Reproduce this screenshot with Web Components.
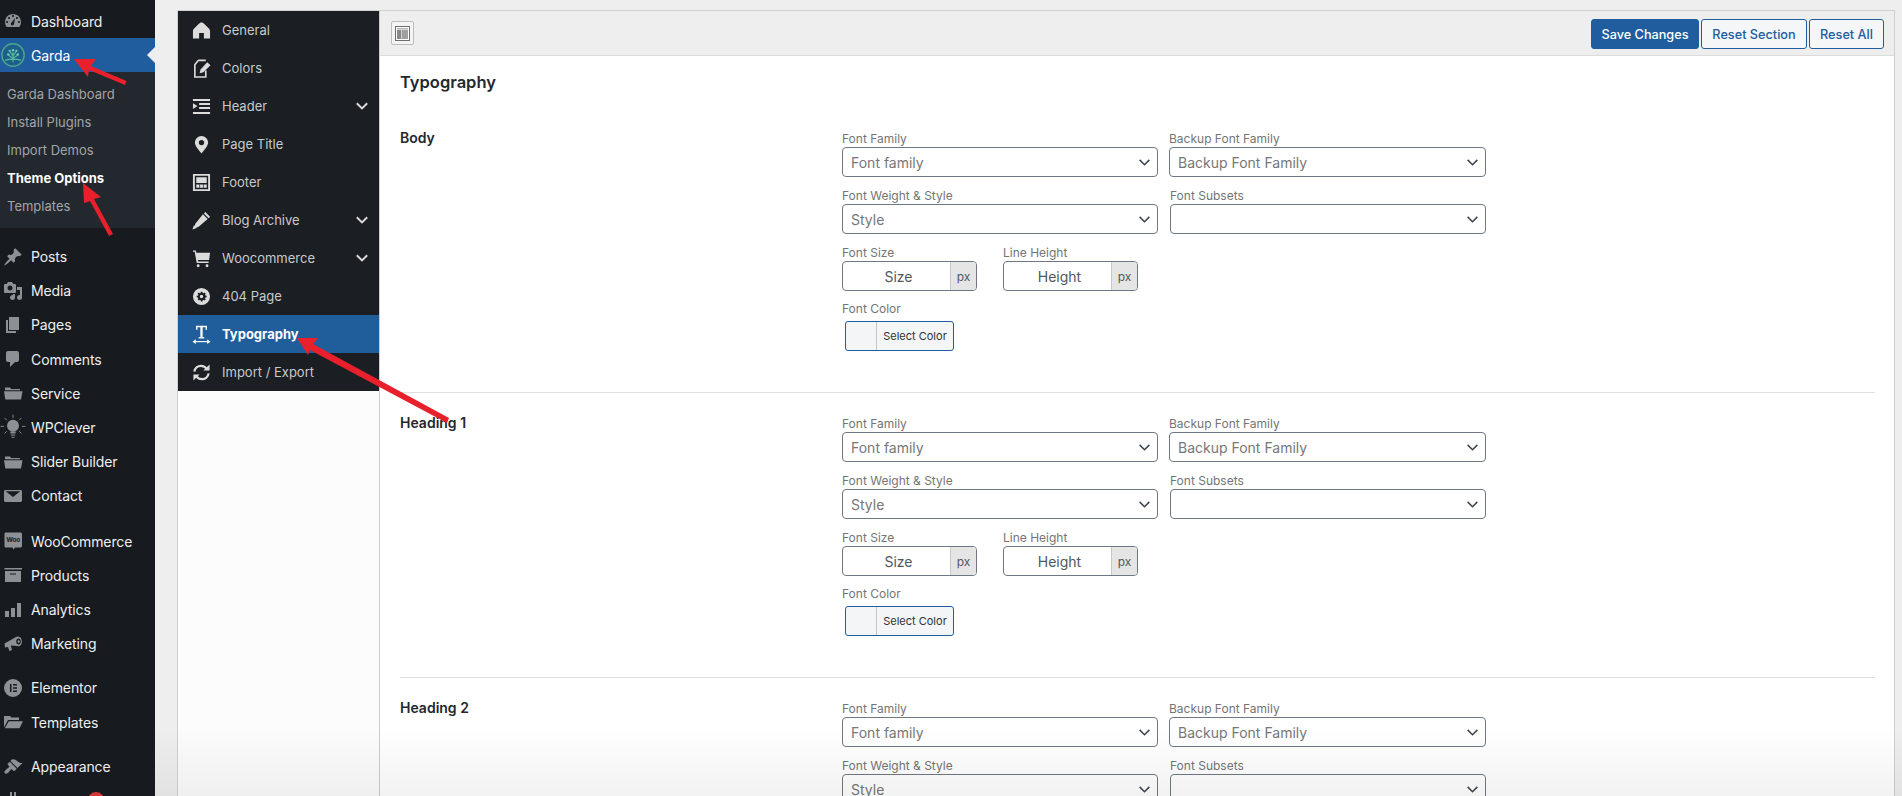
<!DOCTYPE html>
<html lang="en">
<head>
<meta charset="utf-8">
<title>Theme Options</title>
<style>
  html, body { margin: 0; height: 796px; overflow: hidden; background: #eeeeee; }
  body { font-family: Inter, "Liberation Sans", sans-serif; position: relative; display: flex; align-items: stretch; }
</style>
</head>
<body>
<wp-admin-menu></wp-admin-menu>
<options-panel></options-panel>
<page-annotations></page-annotations>

<script>
const ICONS = {
  dashboard: '<path fill-rule="evenodd" d="M3.76 16h12.48c1.1-1.37 1.76-3.11 1.76-5 0-4.42-3.58-8-8-8s-8 3.58-8 8c0 1.89.66 3.63 1.76 5zM10 4c.55 0 1 .45 1 1s-.45 1-1 1-1-.45-1-1 .45-1 1-1zM6 6c.55 0 1 .45 1 1s-.45 1-1 1-1-.45-1-1 .45-1 1-1zm8 0c.55 0 1 .45 1 1s-.45 1-1 1-1-.45-1-1 .45-1 1-1zm-5.37 5.55L12 7l-1 6c-.1 1-1 1.5-1.8 1.4-1-.2-1.6-1.1-1.2-2.2.1-.3.3-.5.63-.65zM4 10c.55 0 1 .45 1 1s-.45 1-1 1-1-.45-1-1 .45-1 1-1zm12 0c.55 0 1 .45 1 1s-.45 1-1 1-1-.45-1-1 .45-1 1-1z"/>',
  garda: '<circle cx="10" cy="10" r="9.300" fill="#1d5f8a" stroke="#4aa58a" stroke-width="1.200"/><g fill="none" stroke="#55b79b" stroke-width="1"><path d="M10 16V8M10 13 6 10M10 13l4-3M10 11 7.500 7M10 11l2.500-4M3.500 14.500c2-1 4-1 6.500-1s4.500 0 6.500 1"/></g><g fill="#6fd0b0"><circle cx="10" cy="6" r="1"/><circle cx="6" cy="9.500" r="1"/><circle cx="14" cy="9.500" r="1"/><circle cx="7.200" cy="6.500" r=".9"/><circle cx="12.800" cy="6.500" r=".9"/></g>',
  pin: '<path d="M10.44 3.02l1.82-1.82 6.36 6.35-1.83 1.82c-1.05-.68-2.48-.57-3.41.36l-.75.75c-.92.93-1.04 2.35-.35 3.41l-1.83 1.82-2.41-2.41-2.8 2.79c-.42.42-3.38 2.71-3.8 2.29s1.86-3.39 2.28-3.81l2.79-2.79L4.1 9.36l1.83-1.82c1.05.69 2.48.57 3.4-.36l.75-.75c.93-.92 1.05-2.35.36-3.41z"/>',
  media: '<path fill-rule="evenodd" d="M13 11V4c0-.55-.45-1-1-1h-1.67L9 1H5L3.67 3H2c-.55 0-1 .45-1 1v7c0 .55.45 1 1 1h10c.55 0 1-.45 1-1zM7 4.500c1.380 0 2.500 1.120 2.500 2.500S8.380 9.500 7 9.500 4.500 8.380 4.500 7 5.620 4.500 7 4.500zM14 6h5v10.500c0 1.380-1.120 2.500-2.500 2.500S14 17.880 14 16.500s1.120-2.500 2.500-2.500c.17 0 .34.02.5.05V9h-3V6zm-4 8.050V13h2v3.500c0 1.380-1.120 2.500-2.500 2.500S7 17.880 7 16.500 8.120 14 9.500 14c.17 0 .34.02.5.05z"/>',
  pages: '<path d="M6 15V2h10v13H6zm-1 1h8v2H3V5h2v11z"/>',
  comments: '<path d="M5 2h9c1.100 0 2 .9 2 2v7c0 1.100-.9 2-2 2h-2l-5 5v-5H5c-1.100 0-2-.9-2-2V4c0-1.100.9-2 2-2z"/>',
  folder: '<path d="M2 4.500h5l1.200 1.500H17v1.300H2zM1 8.200h18.500L18 16.500H2.300z"/>',
  bulb: '<g fill="none" stroke="currentColor" stroke-width=".7"><path d="M10 .5v2.500M3.500 3l1.800 1.800M16.500 3l-1.800 1.800M.5 9.500H3M17 9.500h2.500M3.500 15l1.800-1.800M16.500 15l-1.800-1.800"/></g><circle cx="10" cy="9" r="4.600"/><path d="M8 13.500h4V15H8zM8.300 15.800h3.400v.8H8.300zM8.800 17.500h2.400v.8H8.800z"/>',
  email: '<path fill-rule="evenodd" d="M2.500 4h15c.8 0 1.500.7 1.500 1.500v9c0 .8-.7 1.500-1.500 1.500h-15C1.700 16 1 15.300 1 14.500v-9C1 4.700 1.700 4 2.500 4zm.2 1.300L10 11l7.300-5.700v-.1H2.700z"/>',
  woo: '<path d="M3 1.500h14.500c.9 0 1.500.6 1.500 1.500v12c0 .9-.6 1.500-1.500 1.500H12l-1.500 2-1-2H3c-.9 0-1.500-.6-1.500-1.500V3c0-.9.6-1.500 1.500-1.500z"/><text x="10.200" y="11" font-size="6.500" font-weight="700" text-anchor="middle" fill="#171b1f" font-family="Inter, sans-serif">Woo</text>',
  archive: '<path fill-rule="evenodd" d="M19 3v1.500H1.500V3zM2 6h16v11H2zm11 3.500V8.500H7v1z"/>',
  bars: '<path d="M2 11h4v6H2zM8 8h4v9H8zM14 3h4v14h-4z"/>',
  megaphone: '<path fill-rule="evenodd" d="M1.500 9.500 13 3c1.500-1 4.500-.8 5.500 2.500s-.2 6-2.500 6.800l-7.200-.8-1 .3 1.200 4-2.400 1.500L5 13l-3 .5zM15.500 4.500c-1.300 0-2.300 1.300-2.300 3s1 3 2.300 3 2.300-1.300 2.300-3-1-3-2.300-3zM15.600 6.200c.7 0 1.100.6 1.100 1.300s-.4 1.300-1.100 1.300c-.6 0-1.100-.6-1.100-1.300s.5-1.300 1.100-1.300z"/>',
  elementor: '<path fill-rule="evenodd" d="M10 1a9 9 0 1 1 0 18 9 9 0 0 1 0-18zM7 6v8h1.500V6zm3 0v1.500h4V6zm0 3.200v1.600h4V9.200zm0 3.300V14h4v-1.500z"/>',
  folderOpen: '<path d="M1 4h6l1.500 1.500H16V8H5L1 15.500zM5.800 9.300H20l-3.500 7H1.800z"/>',
  brush: '<path d="M14.480 11.060 7.410 3.990l1.500-1.500c.5-.56 2.300-.47 3.510.32 1.210.8 1.430 1.280 2.910 2.100 1.180.64 2.450 1.260 4.450.85zm-.71.71L6.700 4.700 4.930 6.470c-.39.39-.39 1.020 0 1.410l1.060 1.060c.39.39.39 1.030 0 1.420-.6.6-1.430 1.110-2.210 1.690-.35.26-.7.530-1.010.84C1.430 13.710.96 15.120 1.980 16.140c1.020 1 2.430.54 3.250-.28.31-.31.58-.66.85-1.020.57-.78 1.080-1.610 1.690-2.210.39-.39 1.020-.39 1.410 0l1.060 1.060c.39.39 1.020.39 1.410 0z"/>',
  plug: '<path d="M7 1v5H5v4l3 3v6h4v-6l3-3V6h-2V1h-2v5H9V1z"/>',

  home: '<path d="M10 1.500c1.300 0 2.100.7 3 1.600l5 5.100c.6.6 1 1.300 1 2.200V18.500h-6.500V12.500h-5V18.500H1V10.400c0-.9.4-1.600 1-2.200l5-5.100C7.900 2.200 8.700 1.500 10 1.500z"/>',
  edit: '<g fill="none" stroke="currentColor" stroke-width="1.700"><path d="M6.500 1.500h8M3 6l3.500-4.500M3 5.500v13.500h11.500V12"/></g><path d="M16 3.500 19.500 6.500 12 14l-4 1 1-4z"/>',
  indent: '<path d="M1 2h18v2.200H1zM7.500 6.300H19v2.200H7.500zM7.500 10.400H19v2.200H7.500zM1 15.800h18V18H1zM1 6.500l4.800 3L1 12.500z"/>',
  marker: '<path fill-rule="evenodd" d="M10 1a7 7 0 0 1 7 7c0 3.500-4.500 8.500-7 11.500C7.500 16.500 3 11.500 3 8a7 7 0 0 1 7-7zm0 4.200a2.800 2.800 0 1 0 0 5.600 2.800 2.800 0 0 0 0-5.600z"/>',
  footer: '<path fill-rule="evenodd" d="M1 1h18v18H1zM3 3v14h14V3zM4.500 4.500h11v6h-11zM4.500 12h3.300v3.500H4.500zM8.500 12h3v3.500h-3zM12.200 12h3.300v3.500h-3.300z"/>',
  pencil: '<path d="M14 1 19 6l-1.500 1.500-5-5zM11.500 3.500l5 5-9.500 8-5 2 1.500-5z"/><path d="M.5 19.500l1.500-4.500 3 3z"/>',
  cart: '<path fill-rule="evenodd" d="M1 1.500h3l.6 2.500H19l-1 7.500H6.200l.3 1.700H17.500v1.500H5L2.800 3H1z"/><circle cx="6.500" cy="17.600" r="1.500"/><circle cx="15.800" cy="17.600" r="1.500"/>',
  cog: '<path fill-rule="evenodd" d="M10 1a9 9 0 1 1 0 18 9 9 0 0 1 0-18zm-.9 4 .1 1.300-1 .4-1-.8-1.300 1.300.8 1 -.4 1L5 9.100v1.800l1.300.1.4 1-.8 1 1.300 1.300 1-.8 1 .4.1 1.300h1.800l.1-1.300 1-.4 1 .8 1.300-1.300-.8-1 .4-1 1.300-.1V9.100l-1.300-.1-.4-1 .8-1-1.300-1.300-1 .8-1-.4L10.900 5zM10 8.200a1.800 1.800 0 1 1 0 3.600 1.800 1.800 0 0 1 0-3.600z"/>',
  type: '<g fill="none" stroke="currentColor"><path stroke-width="1.500" d="M5 5V1.500h10V5"/><path stroke-width="2.400" d="M10 1.500v11.500"/><path stroke-width="1.400" d="M7 13.500h6"/><path stroke-width="1.200" d="M2 17.500h16"/></g><path d="M0.500 17.500l3.500-2.500v5zM19.500 17.500l-3.500-2.500v5z"/>',
  refresh: '<g fill="none" stroke="currentColor" stroke-width="2.300"><path d="M2.500 9C3 5.500 6 3 9.500 3c2.500 0 4.700 1.200 6 3.200"/><path d="M17.500 11c-.5 3.500-3.500 6-7 6-2.500 0-4.700-1.200-6-3.200"/></g><path d="M18.500 1.500V8H12zM1.500 18.500V12H8z"/>',
  chevron: '<path fill="none" stroke="currentColor" stroke-width="2.400" d="M3.500 6.500 10 13l6.500-6.500"/>'
};

const icon = (name, size) => `<svg xmlns="http://www.w3.org/2000/svg" width="${size}" height="${size}" viewBox="0 0 20 20" fill="currentColor" aria-hidden="true">${ICONS[name]}</svg>`;

class WpMenuItem extends HTMLElement {
  connectedCallback() {
    const root = this.attachShadow({ mode: 'open' });
    root.innerHTML = `
      <style>
        :host { display: flex; align-items: center; height: 34.15px; color: #eeeff0; font-size: 14px; position: relative; letter-spacing: -.1px; }
        :host([active]) { background: #205d9f; color: #fff; height: 34px; }
        :host([active])::after {
          content: ''; position: absolute; right: 0; top: 9px;
          border: 8px solid transparent; border-right-color: #eeeeee; border-left-width: 0;
        }
        .ic { width: 26px; margin-right: 5px; display: flex; justify-content: center; color: #8d9094; }
        :host([active]) .ic { color: inherit; }
        svg { display: block; flex: none; }
      </style>
      <span class="ic">${icon(this.getAttribute('icon'), this.getAttribute('size') || 20)}</span><slot></slot>`;
  }
}

class WpSubItem extends HTMLElement {
  connectedCallback() {
    this.attachShadow({ mode: 'open' }).innerHTML = `
      <style>
        :host { display: flex; align-items: center; height: 28px; padding-left: 7px; color: #a2a5a8; font-size: 13px; }
        :host([current]) { color: #fff; font-weight: 700; }
      </style><slot></slot>`;
  }
}

class WpAdminMenu extends HTMLElement {
  connectedCallback() {
    const root = this.attachShadow({ mode: 'open' });
    root.innerHTML = `
      <style>
        :host { display: flex; flex-direction: column; gap: 11.500px; flex: 0 0 155px; width: 155px; height: 796px; overflow: hidden; background: #171b1f; box-sizing: border-box; padding-top: 4px; }
        .sub { background: #22282d; padding: 8px 0; }
        .g4 { margin-top: -1.500px; }
        .g5 { margin-top: -1px; }
        .badge { position: absolute; left: 88px; top: 8px; width: 16px; height: 16px; border-radius: 50%; background: #d63638; }
      </style>
      <div>
        <wp-menu-item icon="dashboard">Dashboard</wp-menu-item>
        <wp-menu-item icon="garda" size="24" active>Garda</wp-menu-item>
        <div class="sub">
          <wp-sub-item>Garda Dashboard</wp-sub-item>
          <wp-sub-item>Install Plugins</wp-sub-item>
          <wp-sub-item>Import Demos</wp-sub-item>
          <wp-sub-item current>Theme Options</wp-sub-item>
          <wp-sub-item>Templates</wp-sub-item>
        </div>
      </div>
      <div>
        <wp-menu-item icon="pin">Posts</wp-menu-item>
        <wp-menu-item icon="media">Media</wp-menu-item>
        <wp-menu-item icon="pages">Pages</wp-menu-item>
        <wp-menu-item icon="comments">Comments</wp-menu-item>
        <wp-menu-item icon="folder">Service</wp-menu-item>
        <wp-menu-item icon="bulb" size="26">WPClever</wp-menu-item>
        <wp-menu-item icon="folder">Slider Builder</wp-menu-item>
        <wp-menu-item icon="email">Contact</wp-menu-item>
      </div>
      <div>
        <wp-menu-item icon="woo">WooCommerce</wp-menu-item>
        <wp-menu-item icon="archive">Products</wp-menu-item>
        <wp-menu-item icon="bars">Analytics</wp-menu-item>
        <wp-menu-item icon="megaphone">Marketing</wp-menu-item>
      </div>
      <div class="g4">
        <wp-menu-item icon="elementor">Elementor</wp-menu-item>
        <wp-menu-item icon="folderOpen">Templates</wp-menu-item>
      </div>
      <div class="g5">
        <wp-menu-item icon="brush">Appearance</wp-menu-item>
        <wp-menu-item icon="plug"><span class="badge"></span></wp-menu-item>
      </div>`;
  }
}

class NavItem extends HTMLElement {
  connectedCallback() {
    const root = this.attachShadow({ mode: 'open' });
    const chevron = this.hasAttribute('expand') ? `<span class="chev">${icon('chevron', 16)}</span>` : '';
    root.innerHTML = `
      <style>
        :host { display: flex; align-items: center; height: 38px; color: #c9cacc; font-size: 13px; padding-left: 14px; }
        :host([active]) { background: #205e9b; color: #fff; font-weight: 700; }
        .ic { width: 18px; margin-right: 12px; display: flex; justify-content: center; color: #dcdcdc; }
        :host([active]) .ic { color: #fff; }
        .chev { margin-left: auto; margin-right: 9px; display: flex; color: #dcdcdc; }
        svg { display: block; flex: none; }
      </style>
      <span class="ic">${icon(this.getAttribute('icon'), 19)}</span><slot></slot>${chevron}`;
  }
}

class OptionsNav extends HTMLElement {
  connectedCallback() {
    this.attachShadow({ mode: 'open' }).innerHTML = `
      <style>
        :host { display: block; background: #fcfcfc; border-right: 1px solid #cccccc; }
        nav { background: #1b1e23; }
      </style>
      <nav>
        <nav-item icon="home">General</nav-item>
        <nav-item icon="edit">Colors</nav-item>
        <nav-item icon="indent" expand>Header</nav-item>
        <nav-item icon="marker">Page Title</nav-item>
        <nav-item icon="footer">Footer</nav-item>
        <nav-item icon="pencil" expand>Blog Archive</nav-item>
        <nav-item icon="cart" expand>Woocommerce</nav-item>
        <nav-item icon="cog">404 Page</nav-item>
        <nav-item icon="type" active>Typography</nav-item>
        <nav-item icon="refresh">Import / Export</nav-item>
      </nav>`;
  }
}

class OptionsToolbar extends HTMLElement {
  connectedCallback() {
    this.attachShadow({ mode: 'open' }).innerHTML = `
      <style>
        :host { display: flex; align-items: center; height: 44px; background: #eeeeee; border-bottom: 1px solid #dcdcdc; padding: 0 10px 0 11px; }
        .toggle { width: 23px; height: 24px; box-sizing: border-box; border: 1px solid #bdbdbd; border-radius: 2px; background: #f4f4f4; display: flex; align-items: center; justify-content: center; }
        .actions { margin-left: auto; display: flex; gap: 2px; padding-top: 2px; }
        button { font: 500 12.700px Inter, "Liberation Sans", sans-serif; height: 30px; padding: 0; border-radius: 3px; border: 1px solid #205d9f; background: #f4f6f7; color: #205d9f; }
        .save { width: 108px; background: #205d9f; color: #fff; }
        .section { width: 106px; }
        .all { width: 75px; }
      </style>
      <span class="toggle">
        <svg width="15" height="15" viewBox="0 0 15 15" aria-hidden="true">
          <rect x=".5" y=".5" width="14" height="14" fill="#fff" stroke="#6e6e6e"/>
          <rect x="2" y="2" width="11" height="1.500" fill="#b5b5b5"/>
          <rect x="2" y="4" width="4" height="9" fill="#8a8a8a"/>
          <rect x="6.500" y="4" width="6.500" height="9" fill="#a0a0a0"/>
        </svg>
      </span>
      <div class="actions">
        <button class="save">Save Changes</button>
        <button class="section">Reset Section</button>
        <button class="all">Reset All</button>
      </div>`;
  }
}

class FieldSelect extends HTMLElement {
  connectedCallback() {
    this.attachShadow({ mode: 'open' }).innerHTML = `
      <style>
        :host { display: block; }
        label { display: block; height: 16px; line-height: 16px; font-size: 12px; color: #757575; }
        .box { height: 30px; box-sizing: border-box; border: 1px solid #6f7882; border-radius: 4px; background: #fff; display: flex; align-items: center; padding: 0 5px 0 8px; color: #777; font-size: 14px; }
        svg { margin-left: auto; color: #3c434a; display: block; }
      </style>
      <label>${this.getAttribute('label')}</label>
      <div class="box"><slot></slot>${icon('chevron', 15).replace('stroke-width="2.400"', 'stroke-width="2"')}</div>`;
  }
}

class FieldUnit extends HTMLElement {
  connectedCallback() {
    this.attachShadow({ mode: 'open' }).innerHTML = `
      <style>
        :host { display: block; width: 135px; }
        label { display: block; height: 16px; line-height: 16px; font-size: 12px; color: #757575; }
        .box { height: 30px; box-sizing: border-box; border: 1px solid #6f7882; border-radius: 4px; background: #fff; display: flex; overflow: hidden; color: #50575e; font-size: 14px; }
        .val { flex: 1; display: flex; align-items: center; justify-content: center; padding-left: 4px; }
        .unit { width: 25px; background: #e5e5e5; border-left: 1px solid #c8c8c8; display: flex; align-items: center; justify-content: center; font-size: 12px; color: #50575e; }
      </style>
      <label>${this.getAttribute('label')}</label>
      <div class="box"><span class="val"><slot></slot></span><span class="unit">px</span></div>`;
  }
}

class FieldColor extends HTMLElement {
  connectedCallback() {
    this.attachShadow({ mode: 'open' }).innerHTML = `
      <style>
        :host { display: block; margin-top: -1px; }
        label { display: block; height: 16px; line-height: 16px; font-size: 12px; color: #757575; }
        .btn { margin: 4px 0 0 3px; width: 109px; height: 30px; box-sizing: border-box; border: 1px solid #205d9f; border-radius: 3px; background: #f3f5f6; display: flex; overflow: hidden; font-size: 11px; color: #2c3338; }
        .swatch { width: 30px; border-right: 1px solid #c4c6c8; }
        .txt { flex: 1; display: flex; align-items: center; justify-content: center; }
      </style>
      <label>${this.getAttribute('label')}</label>
      <div class="btn"><span class="swatch"></span><span class="txt">Select Color</span></div>`;
  }
}

class TypoSection extends HTMLElement {
  connectedCallback() {
    this.attachShadow({ mode: 'open' }).innerHTML = `
      <style>
        :host { display: grid; grid-template-columns: 442px 645px; padding: 23px 0 41px; border-bottom: 1px solid #dfdfdf; margin-right: 19px; }
        .name { font-size: 14px; font-weight: 600; color: #23282d; line-height: 16px; margin-top: -1px; }
        .fields { display: grid; grid-template-columns: 316px 317px; column-gap: 11px; row-gap: 11px; align-items: start; }
        .subset { margin-left: 1px; }
        .units { display: flex; gap: 26px; grid-column: 1 / 3; }
        field-color { grid-column: 1 / 3; }
      </style>
      <div class="name">${this.getAttribute('name')}</div>
      <div class="fields">
        <field-select label="Font Family">Font family</field-select>
        <field-select label="Backup Font Family">Backup Font Family</field-select>
        <field-select label="Font Weight &amp; Style">Style</field-select>
        <field-select class="subset" label="Font Subsets"></field-select>
        <div class="units">
          <field-unit label="Font Size">Size</field-unit>
          <field-unit label="Line Height">Height</field-unit>
        </div>
        <field-color label="Font Color"></field-color>
      </div>`;
  }
}

class OptionsPanel extends HTMLElement {
  connectedCallback() {
    this.attachShadow({ mode: 'open' }).innerHTML = `
      <style>
        :host { display: grid; grid-template-columns: 202px 1fr; grid-template-rows: 1fr; flex: 1; min-width: 0; margin: 10px 7px 0 22px; border: 1px solid #d0d0d0; border-bottom: 0; background: #fff; overflow: hidden; }
        .main { min-width: 0; }
        .body { padding-left: 20px; }
        h2 { margin: 0; padding: 15px 0 15px; font-size: 16.500px; line-height: 22px; font-weight: 600; color: #23282d; }
      </style>
      <options-nav></options-nav>
      <div class="main">
        <options-toolbar></options-toolbar>
        <div class="body">
          <h2>Typography</h2>
          <typo-section name="Body"></typo-section>
          <typo-section name="Heading 1"></typo-section>
          <typo-section name="Heading 2"></typo-section>
        </div>
      </div>`;
  }
}

// red arrows and the fade along the bottom edge lie over the page
class PageAnnotations extends HTMLElement {
  connectedCallback() {
    this.attachShadow({ mode: 'open' }).innerHTML = `
      <style>
        :host { position: absolute; inset: 0; pointer-events: none; }
        .fade { position: absolute; left: 155px; right: 0; bottom: 0; height: 70px; background: linear-gradient(rgba(0,0,0,0), rgba(0,0,0,.05)); }
        svg { position: absolute; left: 0; top: 0; }
      </style>
      <div class="fade"></div>
      <svg width="1902" height="796" viewBox="0 0 1902 796" aria-hidden="true">
        <g fill="#e8202c">
          <path d="M74 59 96 59 91 66 126.500 81 125 85 89 70 88 77z"/>
          <path d="M83 183 101 197 94 199 113 234 109 236 90 201 84 203z"/>
          <path d="M297 338 318 338 313 344 449 418 447 423 310 350 308 355z"/>
        </g>
      </svg>`;
  }
}

customElements.define('wp-menu-item', WpMenuItem);
customElements.define('wp-sub-item', WpSubItem);
customElements.define('wp-admin-menu', WpAdminMenu);
customElements.define('nav-item', NavItem);
customElements.define('options-nav', OptionsNav);
customElements.define('options-toolbar', OptionsToolbar);
customElements.define('field-select', FieldSelect);
customElements.define('field-unit', FieldUnit);
customElements.define('field-color', FieldColor);
customElements.define('typo-section', TypoSection);
customElements.define('options-panel', OptionsPanel);
customElements.define('page-annotations', PageAnnotations);
</script>
</body>
</html>
